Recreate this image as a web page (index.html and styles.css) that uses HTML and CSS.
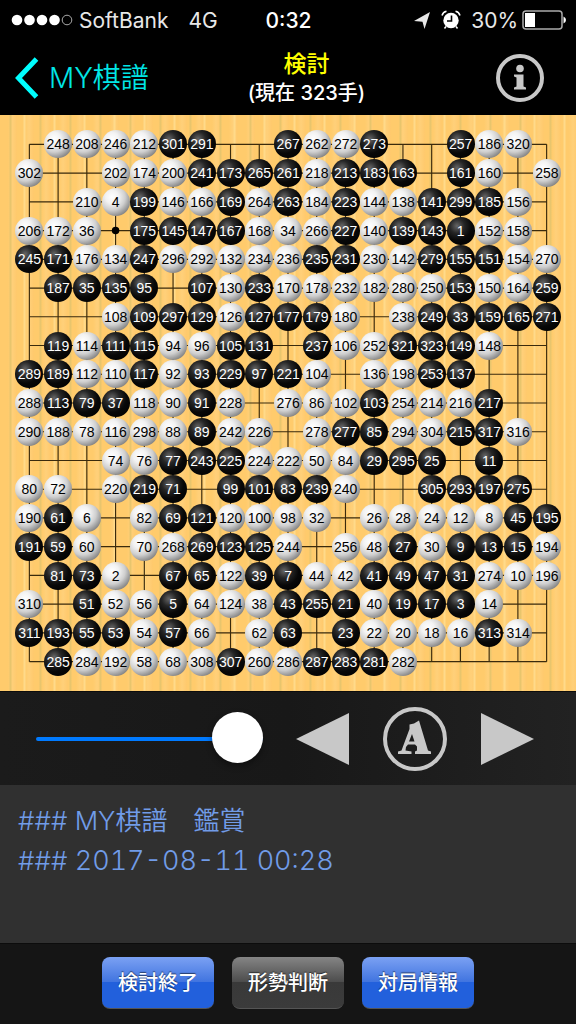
FILE: index.html
```html
<!DOCTYPE html>
<html lang="ja">
<head>
<meta charset="utf-8">
<meta name="viewport" content="width=device-width, initial-scale=1">
<title>検討</title>
<link rel="stylesheet" href="styles.css">
</head>
<body>
<div class="app">
  <div class="status">
    <div class="status-left">
      <svg class="signal" viewBox="0 0 62 12" aria-hidden="true"><circle cx="6" cy="6" r="5.3"/><circle cx="18.5" cy="6" r="5.3"/><circle cx="31" cy="6" r="5.3"/><circle cx="43.5" cy="6" r="5.3"/><circle class="signal-off" cx="56" cy="6" r="4.8"/></svg>
      <span>SoftBank</span>
      <span class="network">4G</span>
    </div>
    <span class="clock">0:32</span>
    <div class="status-right">
      <svg class="locate" viewBox="0 0 16 17" aria-hidden="true"><path d="M16 0L10.500 17L8.500 9.800L0 9Z"/></svg>
      <svg class="alarm" viewBox="0 0 20 20" aria-hidden="true"><circle cx="10" cy="10.500" r="7.700"/><path class="alarm-ears" d="M1 5.500Q2 2 5.500 1.300M14.500 1.300Q18 2 19 5.500M5 16.500L3.500 18.500M15 16.500L16.500 18.500"/><path class="alarm-hands" d="M10.500 5.500V11H6"/></svg>
      <span>30%</span>
      <svg class="battery" viewBox="0 0 44 20" aria-hidden="true"><rect class="battery-case" x="1" y="1" width="39" height="18" rx="3"/><path d="M3 3H13V17H3Z"/><path d="M41.500 6.500Q44 7.500 44 10T41.500 13.500Z"/></svg>
    </div>
  </div>

  <header class="header">
    <a class="back" href="#"><svg class="chevron" viewBox="0 0 24 42" aria-hidden="true"><path d="M21.500 2L3.500 21L21.500 40"/></svg><span>MY棋譜</span></a>
    <div class="heading"><h1>検討</h1><p>(現在 323手)</p></div>
    <button class="icon-button" type="button" aria-label="情報"><svg class="info" viewBox="0 0 48 48" aria-hidden="true"><circle class="ring" cx="24" cy="24" r="22"/><circle cx="24" cy="14.500" r="3.800"/><path d="M18 20.500H27.500V32.500L30 33.500V35.500H18V33.500L20.500 32.500V23.500L18 22.500Z"/></svg></button>
  </header>

  <main class="board" id="board">
    <svg class="lines" id="lines" viewBox="0 0 19 19" aria-hidden="true"></svg>
  </main>

  <div class="controls">
    <input class="slider" type="range" min="0" max="323" value="323" aria-label="手数">
    <button class="icon-button" type="button" aria-label="前の手"><svg class="arrow" viewBox="0 0 54 52" aria-hidden="true"><path d="M0 26L53 0V52Z"/></svg></button>
    <button class="icon-button" type="button" aria-label="自動再生"><svg class="auto" viewBox="0 0 64 64" aria-hidden="true"><circle class="ring" cx="32" cy="32" r="30"/><path fill-rule="evenodd" d="M26.500 17.500L31 16.500L36 13.500L45 43.500L48 44.500V47H32V44.500L34 43.500V39.500L32 37.500H25L23 40L22.500 43.500L28.500 44.500V47H15V44.500L18.500 43.500L26.500 22ZM29 27L26 34.500H31.500Z"/></svg></button>
    <button class="icon-button" type="button" aria-label="次の手"><svg class="arrow" viewBox="0 0 54 52" aria-hidden="true"><path d="M1 0L54 26L1 52Z"/></svg></button>
  </div>

  <section class="comment">
    <p>### MY棋譜　鑑賞</p>
    <p>### <span class="date">2017-08-11 00:28</span></p>
  </section>

  <footer class="actions">
    <button class="action" type="button">検討終了</button>
    <button class="action action-dark" type="button">形勢判断</button>
    <button class="action" type="button">対局情報</button>
  </footer>
</div>
<script src="board.js"></script>
</body>
</html>
```

FILE: styles.css
```css
* { box-sizing: border-box; }
body {
  margin: 0;
  background: #151515;
  color: #fff;
  font-family: Inter, "Noto Sans CJK JP", sans-serif;
}
h1, p { margin: 0; }
button { margin: 0; border: 0; font-family: inherit; }
svg { display: block; fill: currentColor; }
.app { display: flex; flex-direction: column; min-height: 100vh; }

.status {
  display: grid;
  grid-template-columns: 1fr auto 1fr;
  align-items: center;
  height: 40px;
  padding: 0 10px 0 11px;
  background: #000;
  font-size: 21px;
  color: #e8e8e8;
}
.status-left, .status-right { display: flex; align-items: center; }
.status-right { justify-content: flex-end; }
.signal { width: 62px; height: 12px; margin-right: 6px; color: #fff; }
.signal-off { fill: none; stroke: #aaa; stroke-width: 1; }
.network { margin-left: 20px; }
.clock { font-weight: 500; color: #fff; }
.locate { width: 16px; height: 17px; margin-right: 11px; }
.alarm { width: 20px; height: 20px; margin-right: 10px; color: #fff; }
.alarm-ears { fill: none; stroke: #fff; stroke-width: 1.5; }
.alarm-hands { fill: none; stroke: #000; stroke-width: 1.6; }
.battery { width: 44px; height: 20px; margin-left: 4px; color: #fff; }
.battery-case { fill: none; stroke: #aaa; stroke-width: 1.5; }

.header {
  display: grid;
  grid-template-columns: auto 1fr auto;
  align-items: center;
  height: 75px;
  padding: 0 32px 0 15px;
  background: #000;
}
.back {
  display: flex;
  align-items: center;
  gap: 10px;
  color: #00e6e6;
  font-size: 28px;
  line-height: 40px;
  text-decoration: none;
  font-weight: 350;
}
.chevron { width: 24px; height: 42px; fill: none; stroke: #0ff; stroke-width: 5; }
.heading { padding-right: 32px; text-align: center; white-space: nowrap; }
.heading h1 { color: #ff0; font-size: 23px; line-height: 30px; font-weight: 500; }
.heading p { font-size: 20px; line-height: 28px; font-weight: 500; }
.icon-button { display: block; padding: 0; background: none; color: #c8c8c8; }
.ring { fill: none; stroke: currentColor; stroke-width: 4; }
.info { width: 48px; height: 48px; }

.board {
  position: relative;
  display: grid;
  grid-template-columns: repeat(19, 1fr);
  padding: 15px;
  aspect-ratio: 1;
  background:
    repeating-linear-gradient(90deg, transparent 0 9px, #e8c56d 10px 11px, transparent 12px 23px, #ffda8a 24px 25px, transparent 26px 30px),
    repeating-linear-gradient(90deg, #ffcb6c 0 8px, #ffd07a 12px, #ffc96c 17px);
}
.lines { position: absolute; inset: 15px; }
.lines path { fill: none; stroke: #3a2a0c; stroke-width: 0.04; }
.lines circle { fill: #000; }
.cell { position: relative; display: grid; place-items: center; aspect-ratio: 1; }
.stone {
  display: grid;
  place-items: center;
  width: 98%;
  aspect-ratio: 1;
  border-radius: 50%;
  font: 14px/20px "Liberation Sans", Arial, sans-serif;
}
.white { background: radial-gradient(circle at 36% 32%, #fff 0, #f2f2f2 25%, #cfcfcf 50%, #8a8a8a 75%, #666 95%); color: #000; }
.black { background: radial-gradient(circle at 36% 32%, #666 0, #252525 28%, #080808 55%, #000 90%); color: #fff; }

.controls {
  display: flex;
  align-items: center;
  gap: 33px;
  height: 94px;
  padding: 0 42px 0 36px;
  background: linear-gradient(90deg, #1b1b1b, #181818 50%, #222);
  border-top: 1px solid #0c0c0c;
}
.slider {
  flex: 1;
  min-width: 0;
  height: 51px;
  margin: 0;
  appearance: none;
  background: none;
}
.slider::-webkit-slider-runnable-track { height: 4px; border-radius: 2px; background: #007aff; }
.slider::-webkit-slider-thumb {
  appearance: none;
  width: 51px;
  height: 51px;
  margin-top: -25px;
  border-radius: 50%;
  background: #fff;
  box-shadow: 0 3px 6px #0006;
}
.arrow { width: 54px; height: 52px; }
.auto { width: 64px; height: 64px; }

.comment {
  flex: 1;
  min-height: 158px;
  padding: 16px 18px;
  background: #303030;
  color: #719ce8;
  font-size: 26px;
  font-weight: 350;
  line-height: 40px;
}
.date { font-size: 27px; font-variant-numeric: tabular-nums; }

.actions {
  display: flex;
  justify-content: center;
  gap: 18px;
  padding: 13px 16px 16px;
  border-top: 1px solid #0c0c0c;
  background: #151515;
}
.action {
  width: 112px;
  height: 52px;
  padding: 0 0 2px;
  border-bottom: 1px solid #555;
  border-radius: 8px;
  background: linear-gradient(#7ba1f3, #3f73df 50%, #2260dc 50%, #2260dc);
  color: #fff;
  font-size: 20px;
  font-weight: 500;
  text-shadow: 0 -1px 1px #0008;
}
.action-dark { background: linear-gradient(#858585, #4b4b4b 50%, #393939 50%, #3b3b3b); }
```

FILE: board.js
```js
// One line per board row; 0 is an empty point. Odd moves are black, even moves white.
const rows = [
  [0,248,208,246,212,301,291,0,0,267,262,272,273,0,0,257,186,320,0],
  [302,0,0,202,174,200,241,173,265,261,218,213,183,163,0,161,160,0,258],
  [0,0,210,4,199,146,166,169,264,263,184,223,144,138,141,299,185,156,0],
  [206,172,36,0,175,145,147,167,168,34,266,227,140,139,143,1,152,158,0],
  [245,171,176,134,247,296,292,132,234,236,235,231,230,142,279,155,151,154,270],
  [0,187,35,135,95,0,107,130,233,170,178,232,182,280,250,153,150,164,259],
  [0,0,0,108,109,297,129,126,127,177,179,180,0,238,249,33,159,165,271],
  [0,119,114,111,115,94,96,105,131,0,237,106,252,321,323,149,148,0,0],
  [289,189,112,110,117,92,93,229,97,221,104,0,136,198,253,137,0,0,0],
  [288,113,79,37,118,90,91,228,0,276,86,102,103,254,214,216,217,0,0],
  [290,188,78,116,298,88,89,242,226,0,278,277,85,294,304,215,317,316,0],
  [0,0,0,74,76,77,243,225,224,222,50,84,29,295,25,0,11,0,0],
  [80,72,0,220,219,71,0,99,101,83,239,240,0,0,305,293,197,275,0],
  [190,61,6,0,82,69,121,120,100,98,32,0,26,28,24,12,8,45,195],
  [191,59,60,0,70,268,269,123,125,244,0,256,48,27,30,9,13,15,194],
  [0,81,73,2,0,67,65,122,39,7,44,42,41,49,47,31,274,10,196],
  [310,0,51,52,56,5,64,124,38,43,255,21,40,19,17,3,14,0,0],
  [311,193,55,53,54,57,66,0,62,63,0,23,22,20,18,16,313,314,0],
  [0,285,284,192,58,68,308,307,260,286,287,283,281,282,0,0,0,0,0]
];

let grid = "";
for (let i = 0; i < 19; i++) {
  grid += `M0.5 ${i + 0.5}H18.5M${i + 0.5} 0.5V18.5`;
}
let stars = "";
for (const x of [3.5, 9.5, 15.5]) {
  for (const y of [3.5, 9.5, 15.5]) stars += `<circle cx="${x}" cy="${y}" r="0.13"/>`;
}
document.getElementById("lines").innerHTML = `<path d="${grid}"/>${stars}`;

const board = document.getElementById("board");
for (const move of rows.flat()) {
  const cell = document.createElement("div");
  cell.className = "cell";
  if (move) {
    const stone = document.createElement("span");
    stone.className = "stone " + (move % 2 ? "black" : "white");
    stone.textContent = move;
    cell.append(stone);
  }
  board.append(cell);
}
```
